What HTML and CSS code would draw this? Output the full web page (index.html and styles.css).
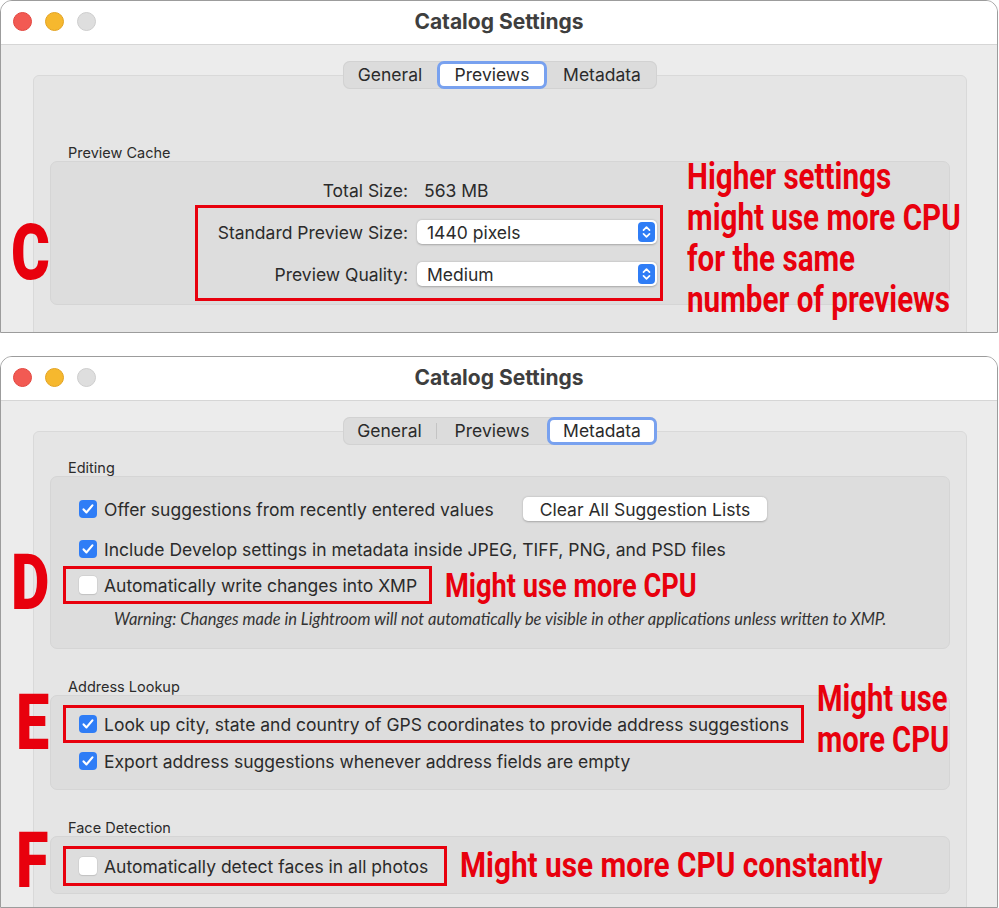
FILE: index.html
```html
<!DOCTYPE html>
<html lang="en">
<head>
  <meta charset="UTF-8">
  <meta name="viewport" content="width=device-width, initial-scale=1.0">
  <title>Catalog Settings</title>
  <link rel="stylesheet" href="styles.css">
</head>
<body>
  <!-- Previews tab -->
  <div class="window win-previews">
    <div class="titlebar">
      <div class="lights">
        <span class="light red"></span>
        <span class="light yellow"></span>
        <span class="light gray"></span>
      </div>
      <div class="title">Catalog Settings</div>
    </div>
    <div class="content">
      <div class="tabs">
        <div class="tab">General</div>
        <div class="tab active">Previews</div>
        <div class="tab">Metadata</div>
      </div>
      <div class="panel">
        <div class="group-label">Preview Cache</div>
        <div class="group cache">
          <div class="field total">
            <span class="field-label">Total Size:</span>
            <span class="field-value">563 MB</span>
          </div>
          <div class="mark mark-c">
            <div class="field">
              <span class="field-label">Standard Preview Size:</span>
              <div class="popup">
                <span>1440 pixels</span>
                <svg class="stepper" width="17" height="20" viewBox="0 0 17 20"><rect width="17" height="20" rx="4" fill="#2f7df6"/><path d="M5.5 8.2l3-3 3 3M5.5 11.8l3 3 3-3" stroke="#fff" stroke-width="1.7" fill="none" stroke-linecap="round" stroke-linejoin="round"/></svg>
              </div>
            </div>
            <div class="field">
              <span class="field-label">Preview Quality:</span>
              <div class="popup">
                <span>Medium</span>
                <svg class="stepper" width="17" height="20" viewBox="0 0 17 20"><rect width="17" height="20" rx="4" fill="#2f7df6"/><path d="M5.5 8.2l3-3 3 3M5.5 11.8l3 3 3-3" stroke="#fff" stroke-width="1.7" fill="none" stroke-linecap="round" stroke-linejoin="round"/></svg>
              </div>
            </div>
          </div>
          <div class="note note-c">Higher settings<br>might use more CPU<br>for the same<br>number of previews</div>
        </div>
      </div>
    </div>
    <div class="letter letter-c">C</div>
  </div>

  <!-- Metadata tab -->
  <div class="window win-metadata">
    <div class="titlebar">
      <div class="lights">
        <span class="light red"></span>
        <span class="light yellow"></span>
        <span class="light gray"></span>
      </div>
      <div class="title">Catalog Settings</div>
    </div>
    <div class="content">
      <div class="tabs">
        <div class="tab sep">General</div>
        <div class="tab">Previews</div>
        <div class="tab active">Metadata</div>
      </div>
      <div class="panel">
        <div class="group-label">Editing</div>
        <div class="group editing">
          <div class="row">
            <span class="check on"><svg width="18" height="18" viewBox="0 0 18 18"><rect width="18" height="18" rx="4" fill="#2f7df6"/><path d="M4.6 9.4l2.9 3 5.9-7" stroke="#fff" stroke-width="2.2" fill="none" stroke-linecap="round" stroke-linejoin="round"/></svg></span>
            <span class="text">Offer suggestions from recently entered values</span>
            <button class="btn">Clear All Suggestion Lists</button>
          </div>
          <div class="row">
            <span class="check on"><svg width="18" height="18" viewBox="0 0 18 18"><rect width="18" height="18" rx="4" fill="#2f7df6"/><path d="M4.6 9.4l2.9 3 5.9-7" stroke="#fff" stroke-width="2.2" fill="none" stroke-linecap="round" stroke-linejoin="round"/></svg></span>
            <span class="text">Include Develop settings in metadata inside JPEG, TIFF, PNG, and PSD files</span>
          </div>
          <div class="marked marked-d">
            <div class="mark row">
              <span class="check off"></span>
              <span class="text">Automatically write changes into XMP</span>
            </div>
            <div class="note note-d">Might use more CPU</div>
          </div>
          <div class="warning">Warning: Changes made in Lightroom will not automatically be visible in other applications unless written to XMP.</div>
        </div>

        <div class="group-label">Address Lookup</div>
        <div class="group address">
          <div class="marked marked-e">
            <div class="mark row">
              <span class="check on"><svg width="18" height="18" viewBox="0 0 18 18"><rect width="18" height="18" rx="4" fill="#2f7df6"/><path d="M4.6 9.4l2.9 3 5.9-7" stroke="#fff" stroke-width="2.2" fill="none" stroke-linecap="round" stroke-linejoin="round"/></svg></span>
              <span class="text">Look up city, state and country of GPS coordinates to provide address suggestions</span>
            </div>
          </div>
          <div class="row">
            <span class="check on"><svg width="18" height="18" viewBox="0 0 18 18"><rect width="18" height="18" rx="4" fill="#2f7df6"/><path d="M4.6 9.4l2.9 3 5.9-7" stroke="#fff" stroke-width="2.2" fill="none" stroke-linecap="round" stroke-linejoin="round"/></svg></span>
            <span class="text">Export address suggestions whenever address fields are empty</span>
          </div>
          <div class="note note-e">Might use<br>more CPU</div>
        </div>

        <div class="group-label">Face Detection</div>
        <div class="group faces">
          <div class="marked marked-f">
            <div class="mark row">
              <span class="check off"></span>
              <span class="text">Automatically detect faces in all photos</span>
            </div>
            <div class="note note-f">Might use more CPU constantly</div>
          </div>
        </div>
      </div>
    </div>
    <div class="letter letter-d">D</div>
    <div class="letter letter-e">E</div>
    <div class="letter letter-f">F</div>
  </div>
</body>
</html>
```

FILE: styles.css
```css
body {
  margin: 0;
  background: #fff;
  font-family: Inter, "Noto Sans", sans-serif;
  color: #2b2b2b;
}

.window {
  position: relative;
  box-sizing: border-box;
  width: 998px;
  border: 1px solid #9c9c9c;
  border-radius: 12px 12px 0 0;
  overflow: hidden;
  background: #ececec;
}
.win-previews {
  height: 333px;
}
.win-metadata {
  height: 552px;
  margin-top: 23px;
}

/* title bar */
.titlebar {
  display: grid;
  grid-template-columns: 1fr auto 1fr;
  align-items: center;
  height: 43px;
  background: #fff;
  border-bottom: 1px solid #d6d6d6;
}
.lights {
  display: flex;
  gap: 13px;
  padding-left: 12px;
  margin-top: -3px;
}
.light {
  width: 19px;
  height: 19px;
  border-radius: 50%;
  box-sizing: border-box;
}
.light.red { background: #f25a53; border: 1px solid #e2463f; }
.light.yellow { background: #f6b82e; border: 1px solid #e2a323; }
.light.gray { background: #dedede; border: 1px solid #cdcdcd; }
.title {
  font-size: 21px;
  font-weight: 700;
  color: #3e3e3e;
  margin-top: -3px;
}

/* content */
.content {
  padding: 16px 30px 0 32px;
}
.tabs {
  position: relative;
  z-index: 1;
  display: flex;
  width: 314px;
  height: 28px;
  margin: 0 auto -14px;
  background: #dcdcdc;
  border-radius: 7px;
  box-shadow: inset 0 0 0 1px #d2d2d2;
}
.tab {
  box-sizing: border-box;
  display: flex;
  align-items: center;
  justify-content: center;
  width: 110px;
  padding-bottom: 1px;
  font-size: 17.5px;
  color: #2b2b2b;
}
.tab:first-child {
  width: 94px;
}
.tab.active {
  background: #fff;
  border: 3px solid #78a1ef;
  border-radius: 7px;
}
.tab.sep {
  border-right: 1px solid #c4c4c4;
  height: 16px;
  margin-top: 6px;
}

.panel {
  background: #e5e5e5;
  border: 1px solid #d9d9d9;
  border-radius: 6px;
  padding: 0 16px 60px;
}
.win-previews .panel .group-label:first-child {
  margin-top: 68px;
}
.win-metadata .panel .group-label:first-child {
  margin-top: 27px;
}

.group-label {
  font-size: 14.5px;
  line-height: 17px;
  padding-left: 18px;
  margin-top: 29px;
  color: #2b2b2b;
}
.group {
  position: relative;
  background: #dddddd;
  border: 1px solid #d5d5d5;
  border-radius: 7px;
}

/* preview cache */
.cache {
  box-sizing: border-box;
  height: 144px;
  padding-top: 16px;
}
.field {
  display: flex;
  align-items: center;
  gap: 9px;
  height: 24px;
  font-size: 17.5px;
}
.field-label {
  width: 198px;
  text-align: right;
  white-space: nowrap;
}
.field.total {
  margin-left: 159px;
}
.field-value {
  padding-left: 7px;
}
.mark {
  border: 3px solid #e8000d;
}
.mark-c {
  display: flex;
  flex-direction: column;
  gap: 18px;
  width: 450px;
  margin: 3px 0 0 144px;
  padding: 12px 0 12px 12px;
}
.popup {
  display: flex;
  align-items: center;
  justify-content: space-between;
  box-sizing: border-box;
  width: 240px;
  height: 24px;
  padding: 0 2px 0 10px;
  background: #fff;
  border-radius: 5px;
  box-shadow: 0 0.5px 2px rgba(0, 0, 0, 0.25);
}

/* annotations: condensed red hand-notes */
.note {
  font-family: Roboto, "DejaVu Sans Condensed", sans-serif;
  font-weight: 700;
  font-size: 36px;
  line-height: 41px;
  color: #e8000d;
  white-space: nowrap;
  transform-origin: left center;
  transform: scaleX(0.8);
}
.note-c {
  position: absolute;
  left: 636px;
  top: -6px;
  font-size: 37px;
  transform-origin: left top;
}
.note-e {
  position: absolute;
  left: 766px;
  top: -17px;
  transform-origin: left top;
  transform: scaleX(0.81);
}
.note-d {
  font-size: 34px;
}
.note-f {
  font-size: 35px;
  transform: scaleX(0.85);
}
.letter {
  position: absolute;
  font-family: Roboto, "DejaVu Sans Condensed", sans-serif;
  font-weight: 900;
  font-size: 78px;
  line-height: 1;
  color: #e8000d;
  transform-origin: left top;
  transform: scaleX(0.76);
}
.letter-c { left: 10px; top: 213px; }
.letter-d { left: 10px; top: 187px; }
.letter-e { left: 15px; top: 327px; }
.letter-f { left: 15px; top: 465px; }

/* checkbox rows */
.row {
  display: flex;
  align-items: center;
  height: 24px;
  font-size: 17.5px;
}
.text {
  white-space: nowrap;
}
.check {
  box-sizing: border-box;
  width: 18px;
  height: 18px;
  margin-right: 7px;
  flex-shrink: 0;
}
.check svg {
  display: block;
}
.check.off {
  background: #fff;
  border-radius: 4px;
  box-shadow: 0 0 0 0.5px #c9c9c9, 0 0.5px 1px rgba(0, 0, 0, 0.15);
}
.btn {
  margin-left: 29px;
  height: 24px;
  padding: 0 17px;
  border: none;
  border-radius: 5px;
  background: #fff;
  box-shadow: 0 0.5px 2px rgba(0, 0, 0, 0.25);
  font-family: inherit;
  font-size: 17.5px;
  color: #2b2b2b;
  white-space: nowrap;
}
.marked {
  display: flex;
  align-items: center;
  margin-left: -16px;
  height: 38px;
}
.marked .mark {
  flex-shrink: 0;
  height: 38px;
  box-sizing: border-box;
  padding: 0 12px 0 13px;
}
.marked .note {
  margin-left: 13px;
  line-height: 38px;
}

.editing {
  padding: 20px 0 19px 28px;
}
.editing .row + .row {
  margin-top: 16px;
}
.marked-d {
  margin-top: 5px;
}
.warning {
  margin-top: 5px;
  padding-left: 35px;
  font-family: Lato, "Open Sans", sans-serif;
  font-style: italic;
  font-size: 16.5px;
  line-height: 20px;
  color: #333;
  white-space: nowrap;
}

.address {
  padding: 9px 0 16px 28px;
}
.address > .row {
  margin-top: 6px;
}

.faces {
  padding: 9px 0 7px 28px;
}
.marked-f,
.marked-f .mark {
  height: 40px;
}
.marked-f .mark {
  padding-right: 16px;
}
```
